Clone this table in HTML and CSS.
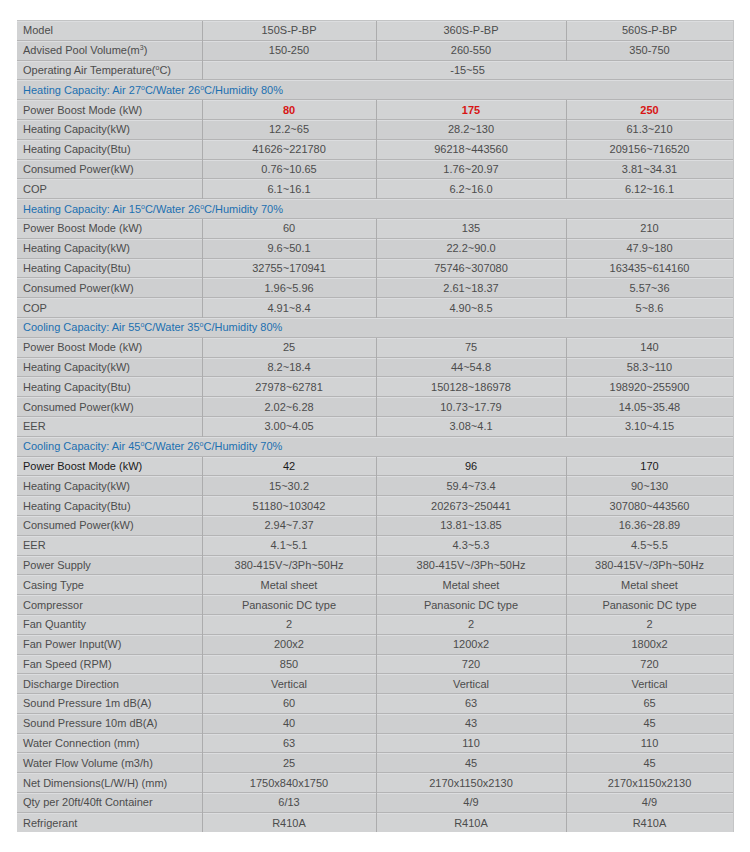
FILE: index.html
```html
<!DOCTYPE html>
<html>
<head>
<meta charset="utf-8">
<link rel="stylesheet" href="styles.css">
</head>
<body>
<table class="spec">
<colgroup><col class="c1"><col class="c2"><col class="c3"><col class="c4"></colgroup>
<tbody>
<tr><td class="lbl">Model</td><td>150S-P-BP</td><td>360S-P-BP</td><td>560S-P-BP</td></tr>
<tr><td class="lbl">Advised Pool Volume(m<sup>3</sup>)</td><td>150-250</td><td>260-550</td><td>350-750</td></tr>
<tr><td class="lbl">Operating Air Temperature(<sup>o</sup>C)</td><td colspan="3">-15~55</td></tr>
<tr class="sec"><td colspan="4">Heating Capacity: Air 27<sup>o</sup>C/Water 26<sup>o</sup>C/Humidity 80%</td></tr>
<tr><td class="lbl">Power Boost Mode (kW)</td><td class="red">80</td><td class="red">175</td><td class="red">250</td></tr>
<tr><td class="lbl">Heating Capacity(kW)</td><td>12.2~65</td><td>28.2~130</td><td>61.3~210</td></tr>
<tr><td class="lbl">Heating Capacity(Btu)</td><td>41626~221780</td><td>96218~443560</td><td>209156~716520</td></tr>
<tr><td class="lbl">Consumed Power(kW)</td><td>0.76~10.65</td><td>1.76~20.97</td><td>3.81~34.31</td></tr>
<tr><td class="lbl">COP</td><td>6.1~16.1</td><td>6.2~16.0</td><td>6.12~16.1</td></tr>
<tr class="sec"><td colspan="4">Heating Capacity: Air 15<sup>o</sup>C/Water 26<sup>o</sup>C/Humidity 70%</td></tr>
<tr><td class="lbl">Power Boost Mode (kW)</td><td>60</td><td>135</td><td>210</td></tr>
<tr><td class="lbl">Heating Capacity(kW)</td><td>9.6~50.1</td><td>22.2~90.0</td><td>47.9~180</td></tr>
<tr><td class="lbl">Heating Capacity(Btu)</td><td>32755~170941</td><td>75746~307080</td><td>163435~614160</td></tr>
<tr><td class="lbl">Consumed Power(kW)</td><td>1.96~5.96</td><td>2.61~18.37</td><td>5.57~36</td></tr>
<tr><td class="lbl">COP</td><td>4.91~8.4</td><td>4.90~8.5</td><td>5~8.6</td></tr>
<tr class="sec"><td colspan="4">Cooling Capacity: Air 55<sup>o</sup>C/Water 35<sup>o</sup>C/Humidity 80%</td></tr>
<tr><td class="lbl">Power Boost Mode (kW)</td><td>25</td><td>75</td><td>140</td></tr>
<tr><td class="lbl">Heating Capacity(kW)</td><td>8.2~18.4</td><td>44~54.8</td><td>58.3~110</td></tr>
<tr><td class="lbl">Heating Capacity(Btu)</td><td>27978~62781</td><td>150128~186978</td><td>198920~255900</td></tr>
<tr><td class="lbl">Consumed Power(kW)</td><td>2.02~6.28</td><td>10.73~17.79</td><td>14.05~35.48</td></tr>
<tr><td class="lbl">EER</td><td>3.00~4.05</td><td>3.08~4.1</td><td>3.10~4.15</td></tr>
<tr class="sec"><td colspan="4">Cooling Capacity: Air 45<sup>o</sup>C/Water 26<sup>o</sup>C/Humidity 70%</td></tr>
<tr class="dark"><td class="lbl">Power Boost Mode (kW)</td><td>42</td><td>96</td><td>170</td></tr>
<tr><td class="lbl">Heating Capacity(kW)</td><td>15~30.2</td><td>59.4~73.4</td><td>90~130</td></tr>
<tr><td class="lbl">Heating Capacity(Btu)</td><td>51180~103042</td><td>202673~250441</td><td>307080~443560</td></tr>
<tr><td class="lbl">Consumed Power(kW)</td><td>2.94~7.37</td><td>13.81~13.85</td><td>16.36~28.89</td></tr>
<tr><td class="lbl">EER</td><td>4.1~5.1</td><td>4.3~5.3</td><td>4.5~5.5</td></tr>
<tr><td class="lbl">Power Supply</td><td>380-415V~/3Ph~50Hz</td><td>380-415V~/3Ph~50Hz</td><td>380-415V~/3Ph~50Hz</td></tr>
<tr><td class="lbl">Casing Type</td><td>Metal sheet</td><td>Metal sheet</td><td>Metal sheet</td></tr>
<tr><td class="lbl">Compressor</td><td>Panasonic DC type</td><td>Panasonic DC type</td><td>Panasonic DC type</td></tr>
<tr><td class="lbl">Fan Quantity</td><td>2</td><td>2</td><td>2</td></tr>
<tr><td class="lbl">Fan Power Input(W)</td><td>200x2</td><td>1200x2</td><td>1800x2</td></tr>
<tr><td class="lbl">Fan Speed (RPM)</td><td>850</td><td>720</td><td>720</td></tr>
<tr><td class="lbl">Discharge Direction</td><td>Vertical</td><td>Vertical</td><td>Vertical</td></tr>
<tr><td class="lbl">Sound Pressure 1m dB(A)</td><td>60</td><td>63</td><td>65</td></tr>
<tr><td class="lbl">Sound Pressure 10m dB(A)</td><td>40</td><td>43</td><td>45</td></tr>
<tr><td class="lbl">Water Connection (mm)</td><td>63</td><td>110</td><td>110</td></tr>
<tr><td class="lbl">Water Flow Volume (m3/h)</td><td>25</td><td>45</td><td>45</td></tr>
<tr><td class="lbl">Net Dimensions(L/W/H) (mm)</td><td>1750x840x1750</td><td>2170x1150x2130</td><td>2170x1150x2130</td></tr>
<tr><td class="lbl">Qty per 20ft/40ft Container</td><td>6/13</td><td>4/9</td><td>4/9</td></tr>
<tr><td class="lbl">Refrigerant</td><td>R410A</td><td>R410A</td><td>R410A</td></tr>
</tbody>
</table>
</body>
</html>
```
FILE: styles.css
```css
html, body {
  margin: 0;
  padding: 0;
  background: #ffffff;
}
body {
  padding: 20px 0 0 17px;
}
.spec {
  border-collapse: collapse;
  table-layout: fixed;
  width: 716px;
  font-family: "Liberation Sans", Arial, sans-serif;
  font-size: 11px;
  color: #4c4c4c;
  background: #d2d3d4;
}
.c1 { width: 185px; }
.c2 { width: 174px; }
.c3 { width: 190px; }
.c4 { width: 167px; }
.spec tr {
  height: 19.8px;
}
.spec tr:nth-child(even) {
  background: #cecfd0;
}
.spec td {
  padding: 0;
  text-align: center;
  vertical-align: middle;
  border-top: 1px solid #b4b4b5;
  border-left: 1px solid #acacad;
  line-height: 12px;
  white-space: nowrap;
  box-shadow: inset 0 1px 0 #dcdddf;
}
.spec td:first-child {
  border-left: none;
}
.spec td:last-child {
  border-right: 1px solid #c4c5c6;
}
.spec tr:first-child td {
  border-top: 1px solid #c2c3c4;
}
.spec td.lbl {
  text-align: left;
  padding-left: 6px;
}
.spec sup {
  font-size: 7px;
  line-height: 0;
  vertical-align: 4px;
}
.sec td {
  text-align: left;
  padding-left: 6px;
  color: #1c70b0;
}
.red {
  color: #d81515;
  font-weight: bold;
}
.dark td {
  color: #1a1a1a;
}
```
